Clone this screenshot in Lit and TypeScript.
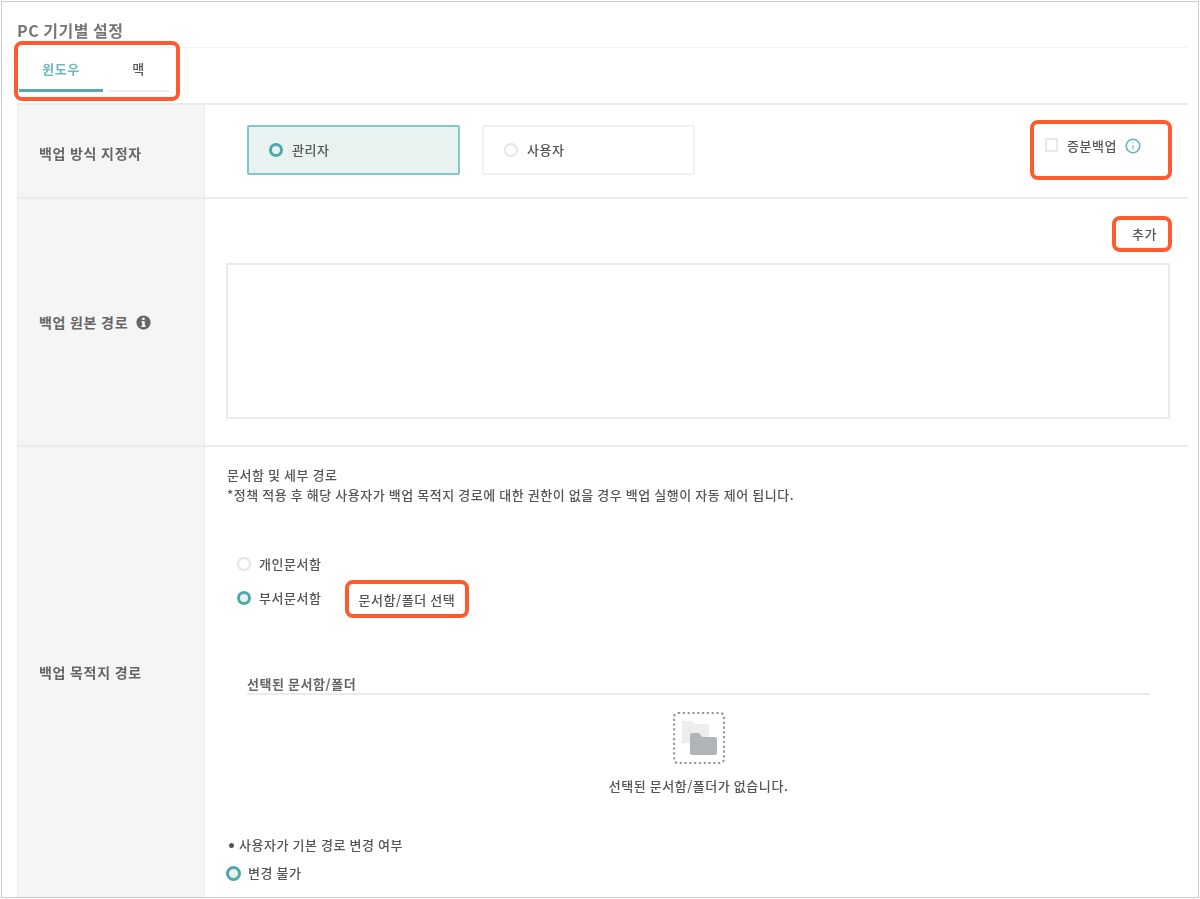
import { LitElement, html, css } from "lit";
import { customElement } from "lit/decorators.js";

@customElement("app-root")
export class AppRoot extends LitElement {
  static styles = css`
    :host { display: block; width: 1200px; height: 899px; overflow: hidden; background: #fff; position: relative;
      font-family: "Noto Sans CJK KR", "Noto Sans", sans-serif; font-size: 13px; letter-spacing: 0.55px; font-weight: 500; color: #555; line-height: 16px; }
    * { box-sizing: border-box; }
    .frame { margin: 1px 0 0 1px; width: 1198px; height: 897px; border: 1px solid #c9c9c9; padding: 0 10px 0 15px; overflow: hidden; filter: blur(0.65px); }
    .title { font-size: 16px; letter-spacing: 0.5px; font-weight: 700; color: #777; line-height: 20px; padding-top: 18px; height: 46px; border-bottom: 1px solid #f3f3f3; white-space: nowrap; }
    .tabs { display: flex; height: 44px; padding-left: 2px; gap: 5px; }
    .tab { height: 44px; padding-top: 13px; text-align: center; border-bottom: 2px solid #eee; color: #555; }
    .tab.on { width: 84px; border-bottom: 3px solid #5aa8ae; color: #6fb9bd; font-weight: 700; }
    .tab.off { width: 61px; }
    .table { margin-top: 11px; border-top: 2px solid #ebebeb; display: grid; grid-template-columns: 188px 1fr; grid-template-rows: 94px 248px 452px; }
    .th { background: #f5f5f5; border-left: 1px solid #ececec; border-right: 1px solid #ececec; border-bottom: 2px solid #ebebeb; display: flex; align-items: center; padding-left: 21px; font-size: 14px; letter-spacing: 0.7px; font-weight: 700; color: #666; gap: 8px; white-space: nowrap; }
    .th.first { padding-top: 4px; }
    .td { border-bottom: 2px solid #ebebeb; min-width: 0; }
    .row1 { display: flex; padding: 20px 20px 0 42px; }
    .card { width: 213px; height: 50px; border: 2px solid #f0f0f0; border-radius: 2px; display: flex; align-items: center; padding-left: 20px; gap: 9px; }
    .card + .card { margin-left: 22px; }
    .card.on { background: #e8f3f1; border-color: #7fc8cb; }
    .radio { flex: none; width: 14px; height: 14px; border-radius: 50%; border: 2px solid #e6e6e6; background: #fff; }
    .radio.on { border: 3px solid #4fa7aa; background: #e8f3f1; }
    .incr { margin-left: auto; display: flex; align-items: flex-start; padding-top: 13px; padding-right: 27px; }
    .chk { width: 13px; height: 14px; border: 2px solid #e8e8e8; margin-right: 9px; }
    .incr span { margin-right: 8px; white-space: nowrap; }
    .row2 { padding: 19px 18px 0 21px; }
    .add-wrap { display: flex; justify-content: flex-end; height: 45px; }
    .add { width: 52px; height: 30px; padding-top: 7px; padding-left: 13px; border: 1px solid #f2f2f2; white-space: nowrap; }
    .box { height: 156px; border: 2px solid #ebebeb; }
    .row3 { padding: 18px 0 0 22px; }
    .line { line-height: 20px; white-space: nowrap; }
    .opts { margin-top: 49px; padding-left: 10px; }
    .opt { display: flex; align-items: center; gap: 8px; height: 20px; white-space: nowrap; }
    .opt + .opt { margin-top: 14px; }
    .pick { margin-left: 29px; margin-top: 4px; }
    .sel { margin: 66px 38px 0 20px; }
    .sel-h { font-weight: 700; line-height: 20px; height: 21px; border-bottom: 2px solid #ebebeb; color: #666; }
    .empty { display: flex; flex-direction: column; align-items: center; padding-top: 17px; }
    .empty svg { display: block; }
    .empty p { margin: 12px 0 0; line-height: 20px; }
    .opt2 { margin-top: 39px; padding-left: 2px; }
    .bul { display: flex; align-items: center; gap: 5px; line-height: 20px; }
    .dot { width: 5px; height: 5px; border-radius: 50%; background: #555; }
    .chg { display: flex; align-items: center; gap: 7px; margin-top: 8px; line-height: 20px; }
    .chg .radio { width: 15px; height: 15px; margin-left: -3px; }
    .call { position: absolute; border: 4px solid #ff5a2d; border-radius: 8px; }
  `;

  render() {
    return html`
      <div class="frame">
        <div class="title">PC 기기별 설정</div>
        <div class="tabs">
          <div class="tab on">윈도우</div>
          <div class="tab off">맥</div>
        </div>
        <div class="table">
          <div class="th first">백업 방식 지정자</div>
          <div class="td row1">
            <div class="card on"><i class="radio on"></i>관리자</div>
            <div class="card"><i class="radio"></i>사용자</div>
            <div class="incr">
              <i class="chk"></i><span>증분백업</span>
              <svg width="16" height="16" viewBox="0 0 16 16" fill="none">
                <circle cx="8" cy="8" r="6.8" stroke="#63b6bb" stroke-width="1.6"/>
                <path d="M8 4.2v1.4M8 7v4.6" stroke="#8fc9cd" stroke-width="1.4"/>
              </svg>
            </div>
          </div>
          <div class="th">백업 원본 경로
            <svg width="15" height="15" viewBox="0 0 16 16">
              <circle cx="8" cy="8" r="7.6" fill="#666"/>
              <path d="M6.6 3h2.6v2.3H6.6zM5.8 6.6h3.5v4.6h1v1.6H5.8v-1.6h1V8.2h-1z" fill="#fff"/>
            </svg>
          </div>
          <div class="td row2">
            <div class="add-wrap"><div class="add">추가</div></div>
            <div class="box"></div>
          </div>
          <div class="th">백업 목적지 경로</div>
          <div class="td row3">
            <div class="line">문서함 및 세부 경로</div>
            <div class="line">*정책 적용 후 해당 사용자가 백업 목적지 경로에 대한 권한이 없을 경우 백업 실행이 자동 제어 됩니다.</div>
            <div class="opts">
              <div class="opt"><i class="radio"></i>개인문서함</div>
              <div class="opt"><i class="radio on"></i>부서문서함<span class="pick">문서함/폴더 선택</span></div>
            </div>
            <div class="sel">
              <div class="sel-h">선택된 문서함/폴더</div>
              <div class="empty">
                <svg width="52" height="52" viewBox="0 0 52 52" fill="none">
                  <rect x="1" y="1" width="50" height="50" rx="4" stroke="#999" stroke-width="2.2" stroke-dasharray="2.2 2.6"/>
                  <path d="M9 10a1 1 0 0 1 1-1h9l3 3h13a1 1 0 0 1 1 1v18H9z" fill="#ededed"/>
                  <path d="M17 23a2 2 0 0 1 2-2h7l3 4h13a2 2 0 0 1 2 2v14a2 2 0 0 1-2 2H19a2 2 0 0 1-2-2z" fill="#b1b5b8"/>
                </svg>
                <p>선택된 문서함/폴더가 없습니다.</p>
              </div>
            </div>
            <div class="opt2">
              <div class="bul"><i class="dot"></i>사용자가 기본 경로 변경 여부</div>
              <div class="chg"><i class="radio on"></i>변경 불가</div>
            </div>
          </div>
        </div>
      </div>
      <div class="call" style="left:14px;top:41px;width:166px;height:60px"></div>
      <div class="call" style="left:1030px;top:120px;width:142px;height:60px"></div>
      <div class="call" style="left:1112px;top:216px;width:60px;height:36px"></div>
      <div class="call" style="left:345px;top:580px;width:124px;height:38px"></div>
    `;
  }
}
